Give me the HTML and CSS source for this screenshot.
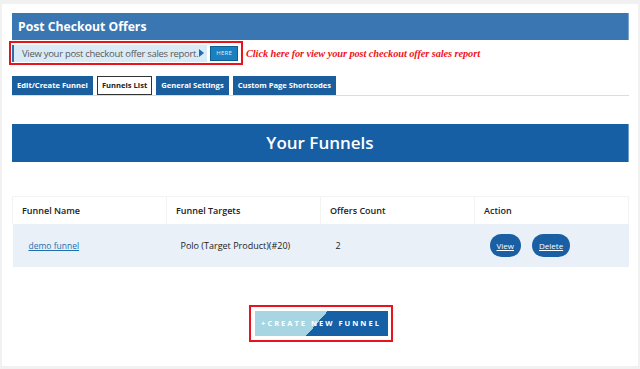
FILE: index.html
```html
<!DOCTYPE html>
<html>
<head>
<meta charset="utf-8">
<link rel="stylesheet" href="styles.css">
</head>
<body>
<div class="panel">
  <div class="title-bar">Post Checkout Offers</div>
  <div class="notice-row">
    <div class="highlight">
      <div class="notice">View your post checkout offer sales report.<span class="tri"></span></div>
      <a class="here">HERE</a>
    </div>
    <span class="hint">Click here for view your post checkout offer sales report</span>
  </div>
  <div class="tabs">
    <a class="tab">Edit/Create Funnel</a>
    <a class="tab active">Funnels List</a>
    <a class="tab">General Settings</a>
    <a class="tab">Custom Page Shortcodes</a>
  </div>
  <div class="section-bar">Your Funnels</div>
  <table class="funnels">
    <thead>
      <tr><th>Funnel Name</th><th>Funnel Targets</th><th>Offers Count</th><th>Action</th></tr>
    </thead>
    <tbody>
      <tr>
        <td class="name"><a href="#">demo funnel</a></td>
        <td class="targets">Polo (Target Product)(#20)</td>
        <td class="count">2</td>
        <td class="actions"><a class="pill" href="#">View</a><a class="pill" href="#">Delete</a></td>
      </tr>
    </tbody>
  </table>
  <div class="create-wrap">
    <div class="create-box"><a class="create">+CREATE NEW FUNNEL</a></div>
  </div>
</div>
</body>
</html>
```
FILE: styles.css
```css
html, body { margin: 0; }
body {
  background: #f1f1f1;
  padding: 4px 2px 3px 2px;
  font-family: "Open Sans", "DejaVu Sans", sans-serif;
}
.panel {
  background: #fff;
  height: 362px;
  box-sizing: border-box;
  padding: 9px 9px 0 10px;
}
.title-bar {
  height: 27px;
  background: #3a76b1;
  border-right: 1px solid #7aa6d2;
  color: #fff;
  font-weight: 700;
  font-size: 12.2px;
  line-height: 27px;
  padding-left: 6px;
}
.notice-row {
  display: flex;
  align-items: center;
  margin-top: 1px;
}
.highlight {
  display: flex;
  align-items: center;
  box-sizing: border-box;
  border: 2px solid #e8141b;
  margin-left: -3px;
  padding: 0 3px 0 1px;
  height: 24px;
  width: 234px;
}
.notice {
  display: flex;
  align-items: center;
  height: 17px;
  background: #d9ebf6;
  border-left: 2px solid #2a6fae;
  color: #5a5a5a;
  font-size: 9.5px;
  padding: 0 3px 0 8px;
  letter-spacing: -0.3px;
  white-space: nowrap;
}
.tri {
  width: 0; height: 0;
  border-left: 5px solid #1f6fb0;
  border-top: 4px solid transparent;
  border-bottom: 4px solid transparent;
  margin-left: 1px;
}
.here {
  margin-left: 3px;
  width: 28px;
  height: 13px;
  background: #1a80bf;
  border: 1px solid #0d5f93;
  color: #dff0fb;
  font-size: 6px;
  line-height: 13px;
  text-align: center;
  letter-spacing: 0.3px;
}
.hint {
  margin-left: 3px;
  color: #f0141b;
  font-family: "Liberation Serif", serif;
  font-style: italic;
  font-weight: 700;
  font-size: 10.4px;
  letter-spacing: -0.1px;
}
.tabs {
  display: flex;
  gap: 4px;
  margin-top: 11px;
  border-bottom: 1px solid #dcdcdc;
}
.tab {
  height: 19px;
  box-sizing: border-box;
  line-height: 19px;
  padding: 0 5px;
  background: #1b5e9e;
  color: #fff;
  font-size: 7.6px;
  font-weight: 700;
}
.tab.active {
  background: #fff;
  color: #222;
  border: 1px solid #333;
  line-height: 17px;
  padding: 0 4px;
}
.section-bar {
  margin-top: 28px;
  height: 38px;
  background: #175fa4;
  border-right: 1px solid #6f9ccb;
  color: #fff;
  font-size: 17px;
  font-weight: 600;
  line-height: 38px;
  text-align: center;
}
.funnels {
  margin-top: 34px;
  width: 617px;
  border-collapse: collapse;
  table-layout: fixed;
  font-size: 9px;
  color: #222;
}
.funnels th {
  height: 27px;
  text-align: left;
  font-weight: 600;
  padding: 0 0 0 9px;
  border: 1px solid #f3f3f3;
  border-bottom: 0;
  background: #fff;
}
.funnels td {
  height: 43px;
  background: #e9f0f7;
  padding: 0;
}
.funnels td.name { padding-left: 16px; }
.funnels td.name a { color: #1f6fb0; font-size: 8.5px; }
.funnels td.targets { padding-left: 14px; }
.funnels td.count { padding-left: 15px; }
.funnels td.actions { padding-left: 15px; }
.pill {
  display: inline-block;
  height: 23px;
  line-height: 23px;
  padding: 0 7px;
  border-radius: 12px;
  background: #1a5fa3;
  color: #fff;
  font-size: 8px;
  margin-right: 11px;
  vertical-align: middle;
}
.create-wrap {
  display: flex;
  justify-content: center;
  margin-top: 38px;
}
.create-box {
  border: 2px solid #e8141b;
  padding: 4px 3px 4px 4px;
}
.create {
  display: block;
  width: 133px;
  height: 25px;
  line-height: 25px;
  text-align: center;
  color: #fff;
  font-size: 7.5px;
  font-weight: 700;
  letter-spacing: 2px;
  background: linear-gradient(131deg, #a7d5e1 47%, #1660a5 47%);
}
```
